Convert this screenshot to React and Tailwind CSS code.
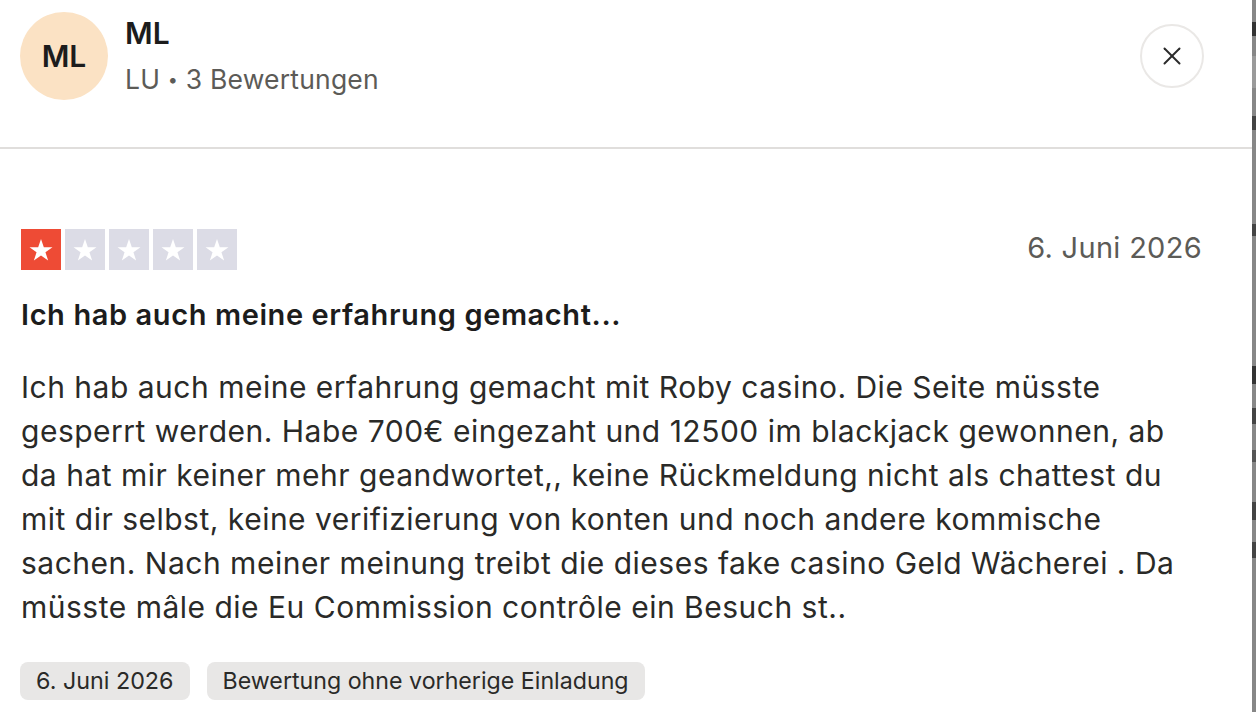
import { X } from 'lucide-react'

function Stars({ rating }) {
  return (
    <div className="flex gap-[4px]">
      {[1, 2, 3, 4, 5].map((n) => (
        <div
          key={n}
          className={`w-[40px] h-[41px] flex items-center justify-center ${n <= rating ? 'bg-[#ee4b35]' : 'bg-[#dcdce6]'}`}
        >
          <svg width="26" height="26" viewBox="0 0 24 24" fill="white">
            <path d="M12 1.8l2.6 7.6h8l-6.5 4.7 2.5 7.7L12 17l-6.6 4.8 2.5-7.7L1.4 9.4h8z" />
          </svg>
        </div>
      ))}
    </div>
  )
}

export default function App() {
  return (
    <div className="flex w-[1256px] h-[712px] overflow-hidden bg-white" style={{ fontFamily: 'Inter, "Noto Sans", sans-serif' }}>
      <div className="flex-1 bg-white text-[#1c1c1c]">
        {/* Cabecera */}
        <div className="h-[149px] border-b-2 border-[#e0dedc] px-[20px] pt-[12px] flex justify-between">
          <div className="flex gap-[17px]">
            <div className="w-[88px] h-[88px] rounded-full bg-[#fbe2c4] flex items-center justify-center text-[30px] font-semibold">
              ML
            </div>
            <div className="pt-[3px]">
              <div className="text-[30px] font-semibold leading-[36px]">ML</div>
              <div className="text-[26.5px] leading-[36px] mt-[10px] text-[#5c5b57] tracking-[0.2px]">
                LU <span className="text-[18px] align-[3px]">•</span> 3 Bewertungen
              </div>
            </div>
          </div>
          <button className="mt-[12px] mr-[28px] w-[64px] h-[64px] rounded-full border-2 border-[#eae8e6] flex items-center justify-center text-[#2b2b2b]">
            <X size={30} strokeWidth={1.6} />
          </button>
        </div>

        {/* Cuerpo */}
        <div className="pl-[21px] pr-[48px] pt-[80px]">
          <div className="flex justify-between items-center">
            <Stars rating={1} />
            <span className="text-[29px] text-[#5c5b57] mr-[2px] tracking-[0.3px] -mt-[3px]">6. Juni 2026</span>
          </div>
          <h3 className="mt-[25px] text-[29px] font-semibold leading-[40px] tracking-[0.6px]">
            Ich hab auch meine erfahrung gemacht...
          </h3>
          <p className="mt-[30px] text-[30px] leading-[44px] text-[#2a2a28] tracking-[0.5px]">
            Ich hab auch meine erfahrung gemacht mit Roby casino. Die Seite müsste gesperrt werden. Habe 700€ eingezaht und 12500 im blackjack gewonnen, ab da hat mir keiner mehr geandwortet,, keine Rückmeldung nicht als chattest du mit dir selbst, keine verifizierung von konten und noch andere kommische sachen. Nach meiner meinung treibt die dieses fake casino Geld Wächerei . Da müsste mâle die Eu Commission contrôle ein Besuch st..
          </p>
          <div className="mt-[33px] flex gap-[17px] -ml-[1px]">
            <span className="h-[38px] px-[16px] rounded-[8px] bg-[#e8e7e6] text-[23.3px] flex items-center text-[#2a2a28]">6. Juni 2026</span>
            <span className="h-[38px] px-[16px] rounded-[8px] bg-[#e8e7e6] text-[23.2px] flex items-center text-[#2a2a28]">Bewertung ohne vorherige Einladung</span>
          </div>
        </div>
      </div>

      {/* Página de fondo detrás del modal */}
      <div className="w-[4px] bg-[#878787] flex flex-col">
        <div className="h-[22px]" />
        <div className="h-[14px] bg-[#333]" />
        <div className="h-[20px]" />
        <div className="h-[32px] bg-[#9a9a9a]" />
        <div className="h-[28px]" />
        <div className="h-[14px] bg-[#444]" />
        <div className="h-[94px]" />
        <div className="h-[12px] bg-[#444]" />
        <div className="h-[130px]" />
        <div className="h-[18px] bg-[#333]" />
        <div className="h-[24px]" />
        <div className="h-[16px] bg-[#444]" />
        <div className="h-[26px]" />
        <div className="h-[12px] bg-[#555]" />
        <div className="h-[40px]" />
        <div className="h-[18px] bg-[#444]" />
        <div className="h-[22px]" />
        <div className="h-[16px] bg-[#444]" />
      </div>
    </div>
  )
}
